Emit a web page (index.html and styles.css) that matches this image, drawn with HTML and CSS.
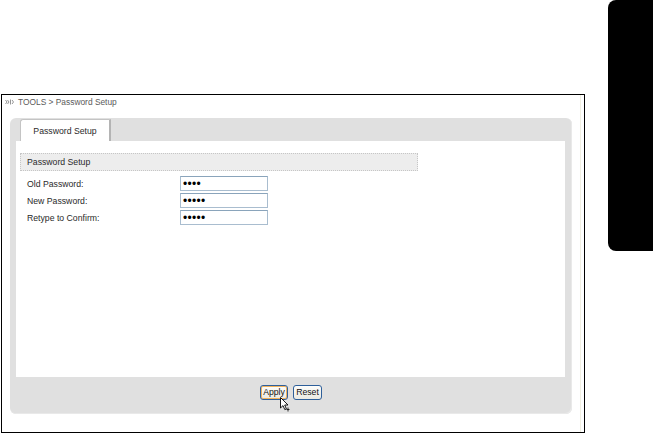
FILE: index.html
```html
<!DOCTYPE html>
<html>
<head>
<meta charset="utf-8">
<link rel="stylesheet" href="styles.css">
</head>
<body>
<div class="frame">
  <div class="inner">
    <div class="crumb">
      <svg class="crumb-icon" width="10" height="6" viewBox="0 0 10 6"><path d="M0.5 1 L2 3 L0.5 5 M2.5 1 L4 3 L2.5 5" stroke="#8a8a8a" stroke-width="0.9" fill="none"/><path d="M5.5 0.5 V5.5" stroke="#8a8a8a" stroke-width="0.9"/><path d="M7 1 L8.5 3 L7 5" stroke="#8a8a8a" stroke-width="0.9" fill="none"/></svg>
      <span>TOOLS &gt; Password Setup</span>
    </div>
    <div class="panel">
      <div class="tabs">
        <div class="tab">Password Setup</div>
      </div>
      <div class="content">
        <div class="section-head">Password Setup</div>
        <div class="rows">
          <div class="row"><label class="label">Old Password:</label><input class="field" type="password" value="1234"></div>
          <div class="row"><label class="label">New Password:</label><input class="field" type="password" value="12345"></div>
          <div class="row"><label class="label">Retype to Confirm:</label><input class="field" type="password" value="12345"></div>
        </div>
      </div>
      <div class="footer">
        <div class="btn-wrap">
          <button class="btn btn-focus">Apply</button>
          <svg class="cursor" width="11" height="15" viewBox="0 0 11 15"><path d="M0.5 0.5 L0.5 11 L3 8.6 L4.8 12.6 L6.4 11.9 L4.7 8 L8 8 Z" fill="#fff" stroke="#000" stroke-width="0.9" stroke-linejoin="round"/><path d="M8 10.5 V14.5 M6.5 12.5 H9.5" stroke="#000" stroke-width="0.8"/></svg>
        </div>
        <button class="btn">Reset</button>
      </div>
    </div>
  </div>
</div>
<div class="sidetab"></div>
</body>
</html>
```

FILE: styles.css
```css
html, body {
  margin: 0;
  padding: 0;
  background: #fff;
}
body {
  width: 653px;
  height: 434px;
  display: flex;
  align-items: flex-start;
  font-family: "Liberation Sans", Arial, sans-serif;
  font-size: 8.7px;
  color: #2a2a2a;
  overflow: hidden;
}
.frame {
  margin-top: 94px;
  margin-left: 1px;
  width: 584px;
  height: 339px;
  box-sizing: border-box;
  border: 1px solid #000;
}
.inner {
  width: 579px;
  height: 100%;
  box-sizing: border-box;
  border-right: 1px solid #f1efe2;
  display: flex;
  flex-direction: column;
}
.crumb {
  height: 23px;
  box-sizing: border-box;
  padding-top: 1px;
  padding-left: 3px;
  display: flex;
  align-items: flex-start;
  line-height: 12px;
  color: #5a5a5a;
  font-size: 8.4px;
}
.crumb-icon {
  margin-top: 3px;
  margin-right: 3px;
}
.panel {
  margin-left: 8px;
  width: 562px;
  height: 296px;
  background: #e0e0e0;
  border-radius: 6px;
  box-shadow: inset -1px -1px 0 #e9e9e9;
  display: flex;
  flex-direction: column;
}
.tabs {
  height: 23px;
  padding-left: 10px;
  display: flex;
  align-items: flex-end;
}
.tab {
  width: 91px;
  height: 22px;
  box-sizing: border-box;
  background: #fff;
  border: 1px solid #c4c4c4;
  border-bottom: none;
  border-right: 2px solid #b4b4b4;
  border-top-left-radius: 3px;
  text-align: center;
  line-height: 22px;
}
.content {
  margin: 0 7px 0 6px;
  height: 236px;
  background: #fff;
  padding-top: 12px;
  box-sizing: border-box;
}
.section-head {
  margin-left: 4px;
  width: 398px;
  height: 18px;
  box-sizing: border-box;
  background: #ededed;
  border: 1px dotted #c6c6c6;
  padding-left: 6px;
  line-height: 16px;
}
.rows {
  margin-top: 5px;
  display: flex;
  flex-direction: column;
  gap: 2px;
}
.row {
  display: flex;
  align-items: center;
  height: 15px;
}
.label {
  width: 164px;
  padding-left: 11px;
  box-sizing: border-box;
}
.field {
  width: 88px;
  height: 15px;
  box-sizing: border-box;
  margin: 0;
  padding: 0 2px;
  border: 1px solid #a9bdcf;
  border-top-color: #8aa4bb;
  font-family: "Liberation Sans", Arial, sans-serif;
  font-size: 12px;
  letter-spacing: 0.3px;
  color: #000;
  outline: none;
}
.footer {
  flex: 1;
  display: flex;
  justify-content: center;
  align-items: flex-start;
  padding-top: 8px;
  gap: 5px;
}
.btn-wrap {
  position: relative;
}
.btn {
  margin: 0;
  height: 15px;
  padding: 0 2px;
  box-sizing: border-box;
  background: linear-gradient(#fdfdfb, #ebeae3);
  border: 1px solid #2e5f9a;
  border-radius: 3px;
  font-family: "Liberation Sans", Arial, sans-serif;
  font-size: 8.7px;
  color: #111;
  line-height: 11px;
}
.btn-focus {
  width: 28px;
  box-shadow: inset 0 0 0 1px #f2b25c;
}
.btn:not(.btn-focus) {
  width: 29px;
}
.cursor {
  position: absolute;
  left: 20px;
  top: 12px;
}
.sidetab {
  margin-left: auto;
  width: 45px;
  height: 251px;
  background: #000;
  border-radius: 8px 0 0 8px;
}
```
